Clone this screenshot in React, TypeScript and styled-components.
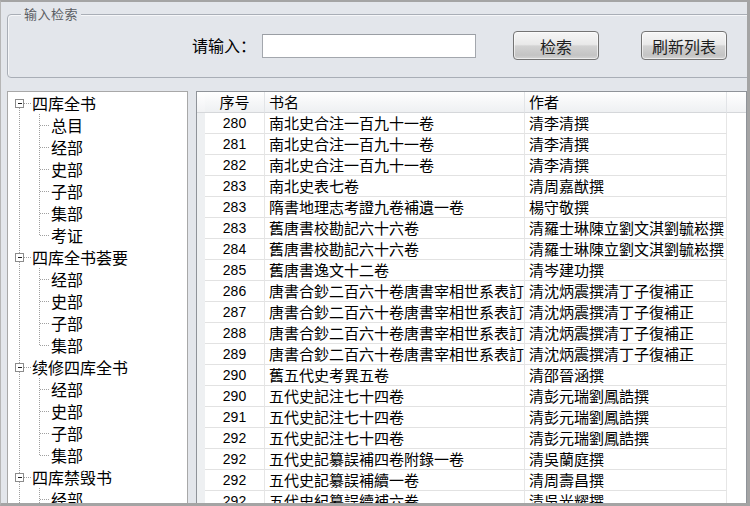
import React from 'react';
import styled, { createGlobalStyle } from 'styled-components';

const GlobalStyle = createGlobalStyle`
  html, body {
    margin: 0;
    padding: 0;
  }
  body {
    background: #e3e6eb;
    font-family: "Noto Sans CJK SC", "Liberation Sans", sans-serif;
  }
`;

const Window = styled.div`
  width: 750px;
  height: 506px;
  box-sizing: border-box;
  border-top: 2px solid #a4a4a4;
  border-left: 1px solid #b6b6b6;
  border-right: 3px solid #a4a4a4;
  border-bottom: 3px solid #a4a4a4;
  background: #e3e6eb;
  overflow: hidden;
  display: flex;
  flex-direction: column;
`;

const SearchGroup = styled.fieldset`
  margin: 4px -20px 0 6px;
  padding: 9px 0 17px 0;
  border: 1px solid #a9aeb6;
  border-radius: 4px;
  box-shadow: inset 1px 1px 0 #f6f7f9;
  min-width: 0;
`;

const GroupTitle = styled.legend`
  margin-left: 13px;
  padding: 0 3px;
  font-size: 13px;
  line-height: 16px;
  color: #5a5d62;
  background: #e3e6eb;
  letter-spacing: 0.5px;
`;

const SearchRow = styled.div`
  display: flex;
  align-items: center;
  padding-left: 184px;
`;

const Label = styled.span`
  font-size: 16px;
  line-height: 29px;
  color: #000;
  margin-right: 6px;
`;

const SearchInput = styled.input`
  width: 214px;
  height: 24px;
  box-sizing: border-box;
  border: 1px solid #a3a7ad;
  border-top-color: #9a9ea4;
  background: #fff;
  outline: none;
  margin: 0 37px 0 0;
`;

const Button = styled.button<{ $gap?: number }>`
  width: 86px;
  height: 29px;
  box-sizing: border-box;
  margin-right: ${p => p.$gap ?? 0}px;
  border: 1px solid #747474;
  border-radius: 4px;
  background: linear-gradient(to bottom, #f6f6f6 0%, #e9e9e9 46%, #d2d2d2 52%, #c4c4c4 86%, #d4d4d4 100%);
  box-shadow: inset 0 0 0 1px rgba(255, 255, 255, 0.6);
  font-family: "Noto Sans CJK SC", sans-serif;
  font-size: 16px;
  line-height: 26px;
  color: #1e1e1e;
  padding: 0;
`;

const Lower = styled.div`
  flex: 1;
  min-height: 0;
  margin-top: 13px;
  padding-left: 6px;
  display: flex;
  gap: 8px;
  overflow: hidden;
`;

const TreePanel = styled.div`
  width: 181px;
  height: 440px;
  box-sizing: border-box;
  flex-shrink: 0;
  border: 1px solid #a8a8a8;
  background: #fff;
`;

const TreeRow = styled.div`
  height: 22px;
  display: flex;
  align-items: center;
  font-size: 16px;
  color: #000;
  white-space: nowrap;
`;

const TreeText = styled.span`
  line-height: 22px;
`;

const GridPanel = styled.div`
  flex: 1;
  height: 440px;
  box-sizing: border-box;
  border: 1px solid #8f9399;
  background: #fff;
  overflow: hidden;
`;

const Grid = styled.table`
  width: 100%;
  table-layout: fixed;
  border-collapse: separate;
  border-spacing: 0;
  font-size: 15px;
`;

const HeadCell = styled.th<{ $align?: string }>`
  height: 21px;
  padding: 0 0 0 4px;
  box-sizing: border-box;
  text-align: ${p => p.$align ?? 'left'};
  font-weight: normal;
  line-height: 20px;
  color: #000;
  background: linear-gradient(to bottom, #ffffff 0%, #f6f7f8 50%, #eef0f2 100%);
  border-bottom: 1px solid #d5d7da;
  border-right: 1px solid #e2e4e7;
  white-space: nowrap;
  overflow: hidden;
`;

const CornerCell = styled.th`
  padding: 0;
  background: linear-gradient(to bottom, #ffffff 0%, #f1f2f4 100%);
  border-bottom: 1px solid #d5d7da;
`;

const RowHead = styled.td`
  padding: 0;
  background: #eef0f2;
`;

const Cell = styled.td<{ $num?: boolean }>`
  height: 21px;
  box-sizing: border-box;
  padding: 0 0 0 ${p => (p.$num ? 0 : 4)}px;
  text-align: ${p => (p.$num ? 'center' : 'left')};
  font-family: ${p => (p.$num ? '"Liberation Sans", Arial, sans-serif' : '"Noto Sans CJK SC", sans-serif')};
  font-size: ${p => (p.$num ? 14 : 15)}px;
  line-height: 20px;
  color: #000;
  border-bottom: 1px solid #e2e2e2;
  border-right: 1px solid #e6e6e6;
  white-space: nowrap;
  overflow: hidden;
`;

const Filler = styled.td`
  padding: 0;
`;

const DOT = '#a0a0a0';

const RootLines = ({ first }: { first: boolean }) => (
  <svg width="24" height="22" viewBox="0 0 24 22" shapeRendering="crispEdges" style={{ flexShrink: 0 }}>
    {!first && <line x1="11.5" y1="0" x2="11.5" y2="7" stroke={DOT} strokeDasharray="1 1" />}
    <line x1="11.5" y1="16" x2="11.5" y2="22" stroke={DOT} strokeDasharray="1 1" />
    <line x1="16" y1="11.5" x2="23" y2="11.5" stroke={DOT} strokeDasharray="1 1" />
    <rect x="7.5" y="7.5" width="8" height="8" fill="#fff" stroke="#8c8c8c" />
    <line x1="9.5" y1="11.5" x2="14" y2="11.5" stroke="#1f1f1f" />
  </svg>
);

const ChildLines = ({ last }: { last: boolean }) => (
  <svg width="43" height="22" viewBox="0 0 43 22" shapeRendering="crispEdges" style={{ flexShrink: 0 }}>
    <line x1="11.5" y1="0" x2="11.5" y2="22" stroke={DOT} strokeDasharray="1 1" />
    <line x1="31.5" y1="0" x2="31.5" y2={last ? 12 : 22} stroke={DOT} strokeDasharray="1 1" />
    <line x1="32" y1="11.5" x2="42" y2="11.5" stroke={DOT} strokeDasharray="1 1" />
  </svg>
);

const tree: { name: string; children: string[] }[] = [
  { name: '四库全书', children: ['总目', '经部', '史部', '子部', '集部', '考证'] },
  { name: '四库全书荟要', children: ['经部', '史部', '子部', '集部'] },
  { name: '续修四库全书', children: ['经部', '史部', '子部', '集部'] },
  { name: '四库禁毁书', children: ['经部', '史部', '子部', '集部'] },
];

const rows: [string, string, string][] = [
  ['280', '南北史合注一百九十一卷', '清李清撰'],
  ['281', '南北史合注一百九十一卷', '清李清撰'],
  ['282', '南北史合注一百九十一卷', '清李清撰'],
  ['283', '南北史表七卷', '清周嘉猷撰'],
  ['283', '隋書地理志考證九卷補遺一卷', '楊守敬撰'],
  ['283', '舊唐書校勘記六十六卷', '清羅士琳陳立劉文淇劉毓崧撰'],
  ['284', '舊唐書校勘記六十六卷', '清羅士琳陳立劉文淇劉毓崧撰'],
  ['285', '舊唐書逸文十二卷', '清岑建功撰'],
  ['286', '唐書合鈔二百六十卷唐書宰相世系表訂', '清沈炳震撰清丁子復補正'],
  ['287', '唐書合鈔二百六十卷唐書宰相世系表訂', '清沈炳震撰清丁子復補正'],
  ['288', '唐書合鈔二百六十卷唐書宰相世系表訂', '清沈炳震撰清丁子復補正'],
  ['289', '唐書合鈔二百六十卷唐書宰相世系表訂', '清沈炳震撰清丁子復補正'],
  ['290', '舊五代史考異五卷', '清邵晉涵撰'],
  ['290', '五代史記注七十四卷', '清彭元瑞劉鳳誥撰'],
  ['291', '五代史記注七十四卷', '清彭元瑞劉鳳誥撰'],
  ['292', '五代史記注七十四卷', '清彭元瑞劉鳳誥撰'],
  ['292', '五代史記纂誤補四卷附錄一卷', '清吳蘭庭撰'],
  ['292', '五代史記纂誤補續一卷', '清周壽昌撰'],
  ['292', '五代史紀纂誤續補六卷', '清吳光耀撰'],
  ['293', '五代史紀纂誤續補六卷', '清吳光耀撰'],
];

export default function App() {
  return (
    <>
      <GlobalStyle />
      <Window>
        <SearchGroup>
          <GroupTitle>输入检索</GroupTitle>
          <SearchRow>
            <Label>请输入：</Label>
            <SearchInput />
            <Button $gap={42}>检索</Button>
            <Button>刷新列表</Button>
          </SearchRow>
        </SearchGroup>
        <Lower>
          <TreePanel>
            {tree.map((root, ri) => (
              <React.Fragment key={ri}>
                <TreeRow>
                  <RootLines first={ri === 0} />
                  <TreeText>{root.name}</TreeText>
                </TreeRow>
                {root.children.map((c, ci) => (
                  <TreeRow key={ci}>
                    <ChildLines last={ci === root.children.length - 1} />
                    <TreeText>{c}</TreeText>
                  </TreeRow>
                ))}
              </React.Fragment>
            ))}
          </TreePanel>
          <GridPanel>
            <Grid>
              <colgroup>
                <col style={{ width: 8 }} />
                <col style={{ width: 60 }} />
                <col style={{ width: 260 }} />
                <col style={{ width: 202 }} />
                <col />
              </colgroup>
              <thead>
                <tr>
                  <CornerCell />
                  <HeadCell $align="center" style={{ paddingLeft: 0 }}>序号</HeadCell>
                  <HeadCell>书名</HeadCell>
                  <HeadCell>作者</HeadCell>
                  <CornerCell />
                </tr>
              </thead>
              <tbody>
                {rows.map((r, i) => (
                  <tr key={i}>
                    <RowHead />
                    <Cell $num>{r[0]}</Cell>
                    <Cell>{r[1]}</Cell>
                    <Cell>{r[2]}</Cell>
                    <Filler />
                  </tr>
                ))}
              </tbody>
            </Grid>
          </GridPanel>
        </Lower>
      </Window>
    </>
  );
}
